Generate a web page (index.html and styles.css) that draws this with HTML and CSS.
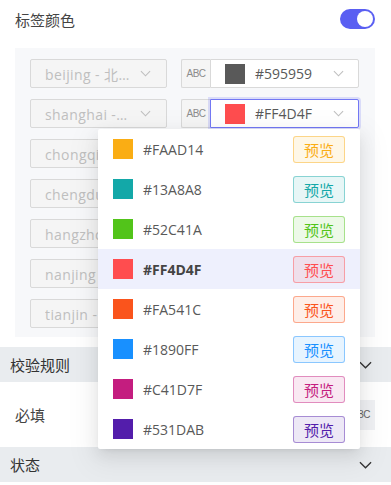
FILE: index.html
```html
<!DOCTYPE html>
<html lang="zh-CN">
<head>
    <meta charset="UTF-8">
    <meta name="viewport" content="width=device-width, initial-scale=1.0">
    <title>标签颜色</title>
    <link rel="stylesheet" href="styles.css">
</head>
<body>

    <div id="page">
        <div class="field-head">
            <span class="field-title">标签颜色</span>
            <span class="switch"><span class="switch-knob"></span></span>
        </div>

        <div class="panel">
            <div class="row">
                <div class="select disabled"><span class="select-text">beijing - 北京</span><svg class="arrow" viewBox="0 0 12 7"><polyline points="1,1 6,6 11,1"/></svg></div>
                <div class="addon">ABC</div>
                <div class="select color"><span class="swatch" style="background:#595959"></span><span class="select-text">#595959</span><svg class="arrow" viewBox="0 0 12 7"><polyline points="1,1 6,6 11,1"/></svg></div>
            </div>
            <div class="row">
                <div class="select disabled"><span class="select-text">shanghai - 上海</span><svg class="arrow" viewBox="0 0 12 7"><polyline points="1,1 6,6 11,1"/></svg></div>
                <div class="addon">ABC</div>
                <div class="select color focused"><span class="swatch" style="background:#FF4D4F"></span><span class="select-text">#FF4D4F</span><svg class="arrow" viewBox="0 0 12 7"><polyline points="1,1 6,6 11,1"/></svg></div>
            </div>
            <div class="row">
                <div class="select disabled"><span class="select-text">chongqing - 重庆</span><svg class="arrow" viewBox="0 0 12 7"><polyline points="1,1 6,6 11,1"/></svg></div>
                <div class="addon">ABC</div>
                <div class="select color"><span class="swatch" style="background:#FAAD14"></span><span class="select-text">#FAAD14</span><svg class="arrow" viewBox="0 0 12 7"><polyline points="1,1 6,6 11,1"/></svg></div>
            </div>
            <div class="row">
                <div class="select disabled"><span class="select-text">chengdu - 成都</span><svg class="arrow" viewBox="0 0 12 7"><polyline points="1,1 6,6 11,1"/></svg></div>
                <div class="addon">ABC</div>
                <div class="select color"><span class="swatch" style="background:#13A8A8"></span><span class="select-text">#13A8A8</span><svg class="arrow" viewBox="0 0 12 7"><polyline points="1,1 6,6 11,1"/></svg></div>
            </div>
            <div class="row">
                <div class="select disabled"><span class="select-text">hangzhou - 杭州</span><svg class="arrow" viewBox="0 0 12 7"><polyline points="1,1 6,6 11,1"/></svg></div>
                <div class="addon">ABC</div>
                <div class="select color"><span class="swatch" style="background:#52C41A"></span><span class="select-text">#52C41A</span><svg class="arrow" viewBox="0 0 12 7"><polyline points="1,1 6,6 11,1"/></svg></div>
            </div>
            <div class="row">
                <div class="select disabled"><span class="select-text">nanjing - 南京</span><svg class="arrow" viewBox="0 0 12 7"><polyline points="1,1 6,6 11,1"/></svg></div>
                <div class="addon">ABC</div>
                <div class="select color"><span class="swatch" style="background:#1890FF"></span><span class="select-text">#1890FF</span><svg class="arrow" viewBox="0 0 12 7"><polyline points="1,1 6,6 11,1"/></svg></div>
            </div>
            <div class="row">
                <div class="select disabled"><span class="select-text">tianjin - 天津</span><svg class="arrow" viewBox="0 0 12 7"><polyline points="1,1 6,6 11,1"/></svg></div>
                <div class="addon">ABC</div>
                <div class="select color"><span class="swatch" style="background:#C41D7F"></span><span class="select-text">#C41D7F</span><svg class="arrow" viewBox="0 0 12 7"><polyline points="1,1 6,6 11,1"/></svg></div>
            </div>
        </div>

        <div class="section-head">
            <span>校验规则</span>
            <svg class="section-arrow" viewBox="0 0 14 8"><polyline points="1,1 7,7 13,1"/></svg>
        </div>
        <div class="section-row">
            <span>必填</span>
            <div class="addon tall">ABC</div>
        </div>
        <div class="section-head">
            <span>状态</span>
            <svg class="section-arrow" viewBox="0 0 14 8"><polyline points="1,1 7,7 13,1"/></svg>
        </div>

        <!-- 颜色下拉框 -->
        <div class="dropdown">
            <div class="option"><span class="swatch" style="background:#FAAD14"></span><span class="option-text">#FAAD14</span><span class="tag" style="color:#FAAD14;background:#FAAD141a;border-color:#FAAD1473">预览</span></div>
            <div class="option"><span class="swatch" style="background:#13A8A8"></span><span class="option-text">#13A8A8</span><span class="tag" style="color:#13A8A8;background:#13A8A81a;border-color:#13A8A873">预览</span></div>
            <div class="option"><span class="swatch" style="background:#52C41A"></span><span class="option-text">#52C41A</span><span class="tag" style="color:#52C41A;background:#52C41A1a;border-color:#52C41A73">预览</span></div>
            <div class="option selected"><span class="swatch" style="background:#FF4D4F"></span><span class="option-text">#FF4D4F</span><span class="tag" style="color:#FF4D4F;background:#FF4D4F1a;border-color:#FF4D4F73">预览</span></div>
            <div class="option"><span class="swatch" style="background:#FA541C"></span><span class="option-text">#FA541C</span><span class="tag" style="color:#FA541C;background:#FA541C1a;border-color:#FA541C73">预览</span></div>
            <div class="option"><span class="swatch" style="background:#1890FF"></span><span class="option-text">#1890FF</span><span class="tag" style="color:#1890FF;background:#1890FF1a;border-color:#1890FF73">预览</span></div>
            <div class="option"><span class="swatch" style="background:#C41D7F"></span><span class="option-text">#C41D7F</span><span class="tag" style="color:#C41D7F;background:#C41D7F1a;border-color:#C41D7F73">预览</span></div>
            <div class="option"><span class="swatch" style="background:#531DAB"></span><span class="option-text">#531DAB</span><span class="tag" style="color:#531DAB;background:#531DAB1a;border-color:#531DAB73">预览</span></div>
        </div>
    </div>

</body>
</html>
```

FILE: styles.css
```css
body {
    margin: 0;
    padding: 0;
    font-family: "Open Sans", "Noto Sans CJK SC", sans-serif;
    font-size: 14px;
    color: #333;
    background-color: #fff;
}

#page {
    position: relative;
    height: 485px;
    overflow: hidden;
}

.field-head {
    display: flex;
    align-items: center;
    justify-content: space-between;
    height: 20px;
    padding: 9px 16px 0 15px;
    margin-bottom: 19px;
}

.field-title {
    font-size: 15px;
    color: #444;
}

.switch {
    width: 35px;
    height: 20px;
    border-radius: 10px;
    background-color: #5a5ff2;
    display: flex;
    align-items: center;
    justify-content: flex-end;
    padding: 0 2px;
    box-sizing: border-box;
}

.switch-knob {
    width: 16px;
    height: 16px;
    border-radius: 50%;
    background-color: #fff;
}

.panel {
    margin: 0 16px 0 15px;
    padding: 11px 16px 9px 15px;
    background-color: #f7f8fa;
    display: flex;
    flex-direction: column;
    gap: 11px;
}

.row {
    display: flex;
    height: 29px;
}

.select {
    display: flex;
    align-items: center;
    box-sizing: border-box;
    height: 29px;
    border: 1px solid #d9d9d9;
    border-radius: 2px;
    background-color: #fff;
}

.select.disabled {
    width: 137px;
    margin-right: 14px;
    padding: 0 15px 0 14px;
    background-color: #f5f5f5;
    color: #bfbfbf;
    letter-spacing: 0.4px;
}

.select-text {
    flex: 1;
    min-width: 0;
    white-space: nowrap;
    overflow: hidden;
    text-overflow: ellipsis;
}

.arrow {
    width: 11px;
    height: 7px;
    margin-left: 9px;
    fill: none;
    stroke: #bfbfbf;
    stroke-width: 1.2;
}

.addon {
    width: 29px;
    height: 29px;
    box-sizing: border-box;
    border: 1px solid #d9d9d9;
    border-right: none;
    border-radius: 2px 0 0 2px;
    background-color: #f5f5f5;
    color: #8c8c8c;
    font-family: "Liberation Sans", sans-serif;
    font-size: 10px;
    letter-spacing: -0.6px;
    display: flex;
    align-items: center;
    justify-content: center;
}

.select.color {
    width: 149px;
    padding: 0 14px 0 14px;
    border-radius: 0 2px 2px 0;
    color: #595959;
}

.select.color .arrow {
    margin-left: 0;
}

.select.focused {
    border-color: #7378f4;
    box-shadow: 0 0 0 2px rgba(90, 95, 242, 0.18);
}

.swatch {
    width: 20px;
    height: 20px;
    margin-right: 10px;
    flex-shrink: 0;
}

.section-head {
    display: flex;
    align-items: center;
    justify-content: space-between;
    height: 35px;
    padding: 0 19px 0 10px;
    background-color: #e9ecef;
    font-size: 15px;
    color: #333;
}

.panel + .section-head {
    margin-top: 10px;
}

.section-arrow {
    width: 13px;
    height: 8px;
    fill: none;
    stroke: #333;
    stroke-width: 1.4;
}

.section-row {
    display: flex;
    align-items: center;
    justify-content: space-between;
    height: 65px;
    padding: 0 16px 0 15px;
    font-size: 15px;
    color: #444;
}

.addon.tall {
    height: 30px;
    border: none;
    background-color: #f0f1f4;
    color: #666;
}

.dropdown {
    position: absolute;
    left: 98px;
    top: 129px;
    width: 262px;
    background-color: #fff;
    border-radius: 2px;
    box-shadow: 0 3px 6px -4px rgba(0, 0, 0, 0.12), 0 6px 16px 0 rgba(0, 0, 0, 0.08), 0 9px 28px 8px rgba(0, 0, 0, 0.05);
}

.option {
    display: flex;
    align-items: center;
    height: 40px;
    padding: 0 15px;
    color: #595959;
}

.option.selected {
    background-color: #eef0fd;
    font-weight: 700;
    color: #444;
}

.option-text {
    flex: 1;
}

.tag {
    width: 52px;
    height: 27px;
    box-sizing: border-box;
    border: 1px solid;
    border-radius: 3px;
    display: flex;
    align-items: center;
    justify-content: center;
    font-weight: 400;
    font-size: 15px;
}
```
